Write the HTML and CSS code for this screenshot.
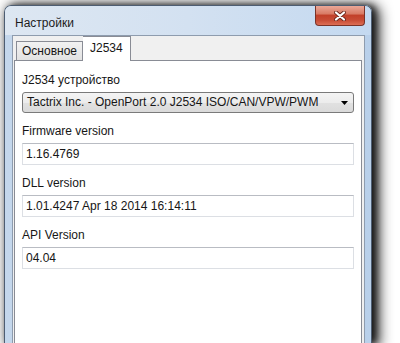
FILE: index.html
```html
<!DOCTYPE html>
<html>
  <head>
    <title>Настройки</title>
    <link rel="stylesheet" href="styles.css">
  </head>
  <body>
    <div class="window">
      <div class="titlebar">
        <span class="title">Настройки</span>
        <div class="close">
          <svg width="12" height="10" viewBox="0 0 12 10">
            <path d="M2 1.5 L10 8.5 M10 1.5 L2 8.5" stroke="#6e2a1f" stroke-width="4" stroke-linecap="round"/>
            <path d="M2 1.5 L10 8.5 M10 1.5 L2 8.5" stroke="#ffffff" stroke-width="2.2" stroke-linecap="round"/>
          </svg>
        </div>
      </div>
      <div class="client">
        <div class="tabs">
          <div class="tab">Основное</div>
          <div class="tab active">J2534</div>
        </div>
        <div class="panel">
          <div class="field">
            <label>J2534 устройство</label>
            <div class="combo">
              <span>Tactrix Inc. - OpenPort 2.0 J2534 ISO/CAN/VPW/PWM</span>
              <svg width="7" height="4" viewBox="0 0 7 4"><path d="M0 0 H7 L3.5 4 Z" fill="#000"/></svg>
            </div>
          </div>
          <div class="field">
            <label>Firmware version</label>
            <div class="textbox">1.16.4769</div>
          </div>
          <div class="field">
            <label>DLL version</label>
            <div class="textbox">1.01.4247 Apr 18 2014 16:14:11</div>
          </div>
          <div class="field">
            <label>API Version</label>
            <div class="textbox">04.04</div>
          </div>
        </div>
      </div>
    </div>
  </body>
</html>
```

FILE: styles.css
```css
body{
  margin: 0;
  background-color: #ffffff;
  overflow: hidden;
  font-family: "Liberation Sans", Arial, sans-serif;
  font-size: 12px;
  color: #161616;
}
.window{
  margin: 5px 0 0 4px;
  width: 368px;
  height: 338px;
  box-sizing: border-box;
  border: 1px solid #4d5d72;
  border-bottom: none;
  border-radius: 7px 7px 0 0;
  background: linear-gradient(to right, #c4d7ec, #b9d0ea);
  box-shadow: 5px 2px 14px 2px rgba(0,0,0,0.85), 4px 0 6px rgba(0,0,0,0.6);
  display: flex;
  flex-direction: column;
}
.titlebar{
  height: 29px;
  display: flex;
  justify-content: space-between;
  align-items: flex-start;
  border-radius: 6px 6px 0 0;
  background: linear-gradient(to right, #dde7f2, #d3e1f1 50%, #c4d9f0);
}
.title{
  padding: 10px 0 0 10px;
  line-height: 14px;
  color: #1c1c1c;
}
.close{
  width: 50px;
  height: 20px;
  box-sizing: border-box;
  margin-right: 6px;
  border: 1px solid #7a3328;
  border-top: none;
  border-radius: 0 0 4px 4px;
  background: linear-gradient(#eaa898 0%, #d97c66 40%, #c2412a 50%, #c84d36 75%, #dd6e55 100%);
  display: flex;
  align-items: center;
  justify-content: center;
}
.client{
  flex: 1;
  margin: 0 6px 0 7px;
  border: 1px solid #8e9cae;
  border-bottom: none;
  background: #f0f0f0;
  padding: 0 2px 0 1px;
  display: flex;
  flex-direction: column;
}
.tabs{
  display: flex;
  align-items: flex-end;
  padding-left: 2px;
}
.tab{
  border: 1px solid #898c95;
  border-bottom: none;
  padding: 0 5px;
  line-height: 18px;
  background: linear-gradient(#f2f2f2, #e2e2e2);
}
.tab.active{
  position: relative;
  z-index: 1;
  margin-bottom: -1px;
  border-left: none;
  padding: 2px 7px 4px;
  background: #ffffff;
}
.panel{
  flex: 1;
  border: 1px solid #898c95;
  border-bottom: none;
  background: #ffffff;
  padding: 12px 7px 0;
}
.field{
  margin-bottom: 11px;
}
label{
  display: block;
  line-height: 14px;
  margin-bottom: 5px;
}
.combo{
  height: 21px;
  box-sizing: border-box;
  border: 1px solid #7a7a7a;
  border-radius: 3px;
  background: linear-gradient(#f4f4f4 0%, #ececec 50%, #e1e1e1 51%, #dadada 100%);
  display: flex;
  align-items: center;
  justify-content: space-between;
  padding: 0 5px 0 4px;
  line-height: 19px;
}
.textbox{
  height: 22px;
  box-sizing: border-box;
  border: 1px solid #dcdfe4;
  border-top-color: #b9bcc3;
  padding-left: 3px;
  line-height: 20px;
}
```
